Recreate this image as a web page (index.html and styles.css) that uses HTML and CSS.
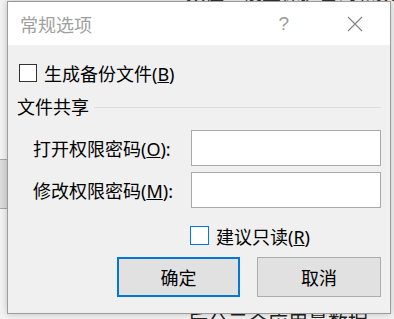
FILE: index.html
```html
<!DOCTYPE html>
<html lang="zh-CN">
<head>
    <meta charset="utf-8">
    <meta name="viewport" content="width=device-width, initial-scale=1.0">
    <title>常规选项</title>
    <link rel="stylesheet" href="styles.css">
</head>
<body>
    <div class="backdrop">
        <div class="bg-top">数值　设置保护密码和数值　工具</div>
        <div class="bg-side"></div>
        <div class="bg-bottom">后公示合应用量数据</div>
    </div>

    <div class="dialog">
        <div class="titlebar">
            <span class="title">常规选项</span>
            <span class="help">?</span>
            <svg class="close" width="16" height="16" viewBox="0 0 16 16">
                <path d="M1 1 L15 15 M15 1 L1 15" stroke="#808080" stroke-width="1.1" fill="none"/>
            </svg>
        </div>

        <div class="dialog-body">
            <label class="check first">
                <span class="box"></span>
                <span>生成备份文件(<u>B</u>)</span>
            </label>

            <div class="group">
                <span>文件共享</span>
                <span class="rule"></span>
            </div>

            <div class="field">
                <span class="label">打开权限密码(<u>O</u>):</span>
                <span class="input"></span>
            </div>
            <div class="field">
                <span class="label">修改权限密码(<u>M</u>):</span>
                <span class="input"></span>
            </div>

            <label class="check readonly">
                <span class="box focus"></span>
                <span>建议只读(<u>R</u>)</span>
            </label>

            <div class="buttons">
                <button class="btn default">确定</button>
                <button class="btn">取消</button>
            </div>
        </div>
    </div>
</body>
</html>
```

FILE: styles.css
```css
body {
    margin: 0;
    width: 394px;
    height: 319px;
    overflow: hidden;
    background: #f3f3f3;
    font-family: "Noto Sans", "Noto Sans CJK SC", sans-serif;
    color: #000;
}

/* application window behind the dialog */
.backdrop {
    position: relative;
    height: 319px;
}

.bg-top {
    margin-top: -17px;
    padding-left: 186px;
    font-size: 19px;
    line-height: 20px;
    color: #333;
    white-space: nowrap;
}

.bg-side {
    margin-top: 156px;
    height: 48px;
    width: 8px;
    border-top: 1px solid #a8a8a8;
    border-bottom: 1px solid #a8a8a8;
    background: #dcdcdc;
}

.bg-bottom {
    margin-top: 102px;
    padding-left: 188px;
    font-size: 20px;
    line-height: 24px;
    color: #222;
    white-space: nowrap;
}

.dialog {
    position: absolute;
    left: 7px;
    top: 1px;
    width: 382px;
    height: 311px;
    border: 1px solid #9c9c9c;
    background: #f0f0f0;
    box-shadow: 0 0 7px rgba(0, 0, 0, 0.22);
    display: flex;
    flex-direction: column;
}

.titlebar {
    height: 43px;
    background: #fff;
    display: flex;
    align-items: center;
    padding-left: 12px;
    flex-shrink: 0;
}

.title {
    font-size: 18px;
    color: #a0a0a0;
    flex: 1;
}

.help {
    font-size: 19px;
    color: #9a9a9a;
    margin-right: 58px;
    font-family: "Liberation Sans", sans-serif;
    font-weight: 300;
}

.close {
    margin-right: 27px;
    margin-top: 1px;
}

.dialog-body {
    padding: 19px 9px 0 11px;
    font-size: 18px;
}

.check {
    display: flex;
    align-items: center;
    gap: 7px;
    height: 18px;
}

.box {
    width: 16px;
    height: 16px;
    border: 1px solid #333;
    background: #fff;
}

.box.focus {
    width: 17px;
    height: 17px;
    border-color: #0078d7;
}

.group {
    display: flex;
    align-items: center;
    gap: 5px;
    margin-top: 14px;
    margin-left: -2px;
    height: 20px;
}

.rule {
    flex: 1;
    height: 1px;
    background: #dcdcdc;
    margin-top: 2px;
}

.field {
    display: flex;
    align-items: center;
    height: 36px;
    margin-top: 6px;
    padding-left: 14px;
}

.group + .field {
    margin-top: 14px;
}

.label {
    flex: 1;
}

.input {
    width: 188px;
    height: 34px;
    border: 1px solid #a9a9a9;
    background: #fff;
}

.readonly {
    margin-top: 18px;
    margin-left: 171px;
    height: 19px;
}

.buttons {
    display: flex;
    justify-content: flex-end;
    gap: 17px;
    margin-top: 12px;
}

.btn {
    width: 124px;
    height: 40px;
    border: 1px solid #adadad;
    background: #e1e1e1;
    font: inherit;
    font-size: 18px;
    padding: 0;
}

.btn.default {
    width: 123px;
    border: 2px solid #0078d7;
}
```
